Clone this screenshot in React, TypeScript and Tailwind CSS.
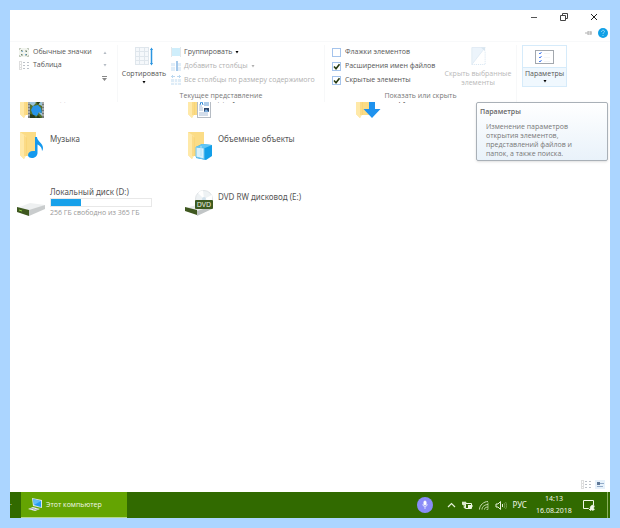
import type { ReactNode } from 'react';

type CheckRow = { id: string; label: string; checked: boolean };
type FolderKind = 'video' | 'documents' | 'downloads' | 'music' | 'objects';

const CHECK_ROWS: CheckRow[] = [
  { id: 'flags', label: 'Флажки элементов', checked: false },
  { id: 'extensions', label: 'Расширения имен файлов', checked: true },
  { id: 'hidden', label: 'Скрытые элементы', checked: true },
];

const FOLDERS: { kind: FolderKind; name: string }[] = [
  { kind: 'video', name: 'Видео' },
  { kind: 'documents', name: 'Документы' },
  { kind: 'downloads', name: 'Загрузки' },
  { kind: 'music', name: 'Музыка' },
  { kind: 'objects', name: 'Объемные объекты' },
];

const DISK = { total: 365, free: 256 };

/* ---------- Icons ---------- */

const TilesIcon = () => (
  <svg width="10" height="9" viewBox="0 0 10 9" shapeRendering="crispEdges">
    <rect x="0" y="0" width="10" height="9" fill="#f1f4ee" />
    <path d="M0 0h2v1H1v1H0zM8 0h2v2H9V1H8zM0 7h1v1h1v1H0zM9 7h1v2H8V8h1z" fill="#c3cabd" />
    <path d="M2 2h2v2h-2zM6 2h2v2h-2zM2 6h2v2h-2zM6 6h2v2h-2z" fill="#b9c3b5" />
    <path d="M2 2h1v1h-1zM7 3h1v1h-1zM2 6h1v1h-1zM7 6h1v1h-1z" fill="#6d8570" />
    <path d="M3 3h1v1h-1zM6 6h1v1h-1z" fill="#7ab2e6" />
  </svg>
);

const TableIcon = () => (
  <svg width="10" height="9" viewBox="0 0 10 9" shapeRendering="crispEdges">
    <path d="M0.5 0.5h2v8h-2zM0 3.5h3M0 6.5h3" fill="none" stroke="#dedede" />
    <path d="M4 1h2v1h-2zM8 1h2v1h-2zM4 4h2v1h-2zM8 4h2v1h-2zM4 7h2v1h-2zM8 7h2v1h-2z" fill="#bcc1c8" />
  </svg>
);

const SortIcon = () => (
  <svg width="18" height="19" viewBox="0 0 18 19">
    <g fill="#f5f8fb" stroke="#dfe6ec" strokeWidth="1" shapeRendering="crispEdges">
      <rect x="0.5" y="0.5" width="13" height="17" />
      <path d="M4.5 0.5v17M9.5 0.5v17M0.5 4.5h13M0.5 9.5h13M0.5 13.5h13" />
    </g>
    <path d="M16.500 2v15" stroke="#2b95e0" strokeWidth="1.500" />
    <path d="M15 3l1.500-2.500L18 3zM15 16l1.500 2.500L18 16z" fill="#2b95e0" />
  </svg>
);

const GroupIcon = () => (
  <svg width="10" height="10" viewBox="0 0 10 10" shapeRendering="crispEdges">
    <rect x="1" y="1" width="8" height="8" fill="#cfeefb" />
    <path d="M0 0h1v10h-1zM9 0h1v10h-1z" fill="#e3e7ea" />
  </svg>
);

const AddColumnIcon = () => (
  <svg width="10" height="10" viewBox="0 0 10 10" shapeRendering="crispEdges">
    <path d="M0 2h4v8h-4zM6 2h4v8h-4z" fill="#e0edf8" />
    <rect x="5" y="0" width="2" height="10" fill="#a4c8ea" />
    <path d="M0 5h4v1h-4zM7 5h3v1h-3z" fill="#f8fbfd" />
  </svg>
);

const FitColumnsIcon = () => (
  <svg width="10" height="10" viewBox="0 0 10 10" shapeRendering="crispEdges">
    <path d="M0 1h4v1h-4zM6 1h4v1h-4zM1 0h1v3h-1zM8 0h1v3h-1z" fill="#bcd8f0" />
    <rect x="0" y="4" width="10" height="6" fill="#deecf7" />
    <path d="M3 4h1v6h-1zM6 4h1v6h-1zM0 7h10v1h-10z" fill="#f8fbfd" />
  </svg>
);

const HideIcon = () => (
  <svg width="15" height="19" viewBox="0 0 15 19">
    <path d="M0.5 0.5h14l-14 18z" fill="#ecf4fb" stroke="#e0ebf4" />
    <path d="M10 0.5h4.5v4z" fill="#d8e5ef" />
    <path d="M14.5 5v13.5h-14" fill="none" stroke="#d4e3f0" strokeDasharray="1 1" />
  </svg>
);

const OptionsIcon = () => (
  <svg width="19" height="14" viewBox="0 0 19 14">
    <rect x="0.5" y="0.5" width="18" height="13" fill="#fff" stroke="#a3a8ae" />
    <path d="M4 3l1 1 1.500-2M4 7l1 1 1.500-2M4 11l1 1 1.500-2" fill="none" stroke="#4a7ff0" />
    <path d="M9 3.500h6M9 7.500h6M9 11.500h6" stroke="#f4f6f7" />
  </svg>
);

const FolderIcon = ({ kind }: { kind: FolderKind }) => (
  <svg width="26" height="29" viewBox="0 0 26 29">
    <path d="M1 1h16v24H6l-1 3-4-4z" fill="#fbdc86" />
    <path d="M1 1l6 4v20l-2 3-4-4z" fill="#ffe9a8" />
    <path d="M5 4l3 3v18H5z" fill="#f9d271" opacity=".6" />
    {kind === 'video' && (
      <g>
        <rect x="9" y="8" width="16" height="20" fill="#53712a" />
        <path d="M9 8h2v20H9zM23 8h2v20h-2z" fill="#777b7a" />
        <path
          d="M9 10h2M9 13h2M9 16h2M9 19h2M9 22h2M9 25h2M23 10h2M23 13h2M23 16h2M23 19h2M23 22h2M23 25h2"
          stroke="#d5d9d8"
        />
        <path d="M11 10h4l2 3-3 3-3-2zM19 14l4-3v5zM19 22l4 1v3z" fill="#9bc4dc" />
        <path d="M12 20l2-4 5-1 3 3 1 5-3-1-2 4-4-1z" fill="#2794e8" />
        <path d="M11 24l4 1 2 3h-6zM17 10l4 2-2 3zM19 25l3 3h-5z" fill="#263a1c" />
      </g>
    )}
    {kind === 'documents' && (
      <g>
        <rect x="10.500" y="8.500" width="13" height="19" fill="#fff" stroke="#b6bcc4" />
        <path d="M12 16h3M12 18h4M12 20h4M12 23h9M12 25h9" stroke="#a8bcd6" />
        <path d="M13 15l1-3h1l1 3" fill="none" stroke="#2b87d8" />
        <path d="M17 13h5M17 15h5" stroke="#5c98d2" />
        <rect x="17" y="18" width="5" height="4" fill="#31486a" />
        <path d="M17 22l2-3 3 3z" fill="#79aee0" />
      </g>
    )}
    {kind === 'downloads' && <path d="M14 6h6v13h5.500L17 28l-8.500-9H14z" fill="#1f92ee" />}
    {kind === 'music' && (
      <path
        d="M16 6h2c0 4 6 6 6 11 0 2-1 3-1 3 0-4-3-6-4.500-6.500V22c0 3-3 5-5.500 5s-4-1-4-3 2-4 5-4h2z"
        fill="#1499ee"
      />
    )}
    {kind === 'objects' && (
      <g>
        <path d="M9 16l6-3 10 1v11l-6 4-10-2z" fill="#129fe8" />
        <path d="M9 16l8 1v11l-8-2z" fill="#d9f1fb" stroke="#6cc4ee" />
        <path d="M9 16l6-3 10 1-7 3z" fill="#62c6f4" />
        <path d="M14 15v10" stroke="#b5e2f7" />
      </g>
    )}
  </svg>
);

const DiskIcon = () => (
  <svg width="28" height="17" viewBox="0 0 28 17">
    <path d="M0 9l13-5 15 2-14 6z" fill="#eef0f1" />
    <path d="M12 11l16-5v4l-16 7z" fill="#c9cccd" />
    <path d="M0 8l12 3v6L0 13z" fill="#3f5820" />
    <path d="M2 11l3 1" stroke="#92cf45" />
  </svg>
);

const DvdIcon = () => (
  <svg width="28" height="26" viewBox="0 0 28 26">
    <circle cx="19" cy="9" r="8.500" fill="#eef2f4" stroke="#e0e4e7" />
    <path d="M19 9L13 3a8.500 8.500 0 0 1 5-2.500zM19 9l8-4v6z" fill="#fff" />
    <circle cx="19" cy="9" r="2" fill="#d2e2ec" />
    <path d="M0 18l12-3 15 1-15 5z" fill="#e9ebec" />
    <path d="M12 21l15-5v3l-15 7z" fill="#c1c5c6" />
    <path d="M0 17l12 3v5L0 21z" fill="#3f5820" />
    <rect x="10" y="10" width="18" height="9" rx="1" fill="#3d5a1f" />
    <text x="19" y="17" textAnchor="middle" fontSize="7" fill="#e8eee0">DVD</text>
  </svg>
);

const ComputerIcon = () => (
  <svg width="15" height="14" viewBox="0 0 15 14">
    <path d="M4 0l10 2v8L5 8z" fill="#d9e5ea" />
    <path d="M5 1l8 2v6L6 7z" fill="#259bf0" />
    <path d="M5 1l8 2-7 4z" fill="#63bdf7" />
    <path d="M0 11l5-2 7 2-5 2z" fill="#eef1f1" />
    <path d="M2 11l5-1M5 12l5-1" stroke="#a7b3b8" />
  </svg>
);

const CaretDown = ({ className = '' }: { className?: string }) => (
  <svg className={className} width="4" height="3" viewBox="0 0 4 3">
    <path d="M0.500 0h3L2 2.500z" fill="currentColor" />
  </svg>
);

/* ---------- Window parts ---------- */

const WindowHeader = () => (
  <header>
    <div className="flex h-3.5 items-center justify-end gap-[22px] pr-3">
      <button aria-label="Свернуть">
        <svg width="8" height="8" viewBox="0 0 8 8"><path d="M1 4.500h6" stroke="#555" /></svg>
      </button>
      <button aria-label="Восстановить">
        <svg width="8" height="8" viewBox="0 0 8 8" fill="none" stroke="#444">
          <path d="M0.500 2.500h5v5h-5zM2.500 2.500v-2h5v5h-2" />
        </svg>
      </button>
      <button aria-label="Закрыть">
        <svg width="8" height="8" viewBox="0 0 8 8"><path d="M1 1l6 6M7 1L1 7" stroke="#222" /></svg>
      </button>
    </div>
    <div className="flex h-[17px] items-center justify-end gap-1.5 pr-0.5">
      <button aria-label="Закрепить ленту">
        <svg width="7" height="6" viewBox="0 0 7 6"><path d="M0 3h3M3 1v4M3 2h3v2H3M6 1v4" stroke="#b2b2b2" fill="none" /></svg>
      </button>
      <button aria-label="Справка">
        <svg width="10" height="10" viewBox="0 0 10 10">
          <circle cx="5" cy="5" r="5" fill="#10a0e6" />
          <path d="M3.500 3.800c0-2 3-2 3-.2 0 1-1.500 1-1.500 2.200M5 7v1" stroke="#9bdcfa" fill="none" />
        </svg>
      </button>
    </div>
  </header>
);

const RibbonGroup = ({ label, className, children }: { label?: string; className: string; children: ReactNode }) => (
  <section className={`flex shrink-0 flex-col border-r border-[#f7f8f9] ${className}`}>
    <div className="flex h-[42px]">{children}</div>
    <div className="h-[15px] text-center leading-[17px] text-[#777]">{label}</div>
  </section>
);

const Ribbon = () => (
  <div className="relative z-10 flex border-t border-[#f8f9fa] pt-[3px] text-[7px] text-[#555]">
    <RibbonGroup className="w-[108px]">
      <div className="flex-1 pt-px pl-[9px]">
        <button className="flex h-[13px] items-center gap-1"><TilesIcon />Обычные значки</button>
        <button className="flex h-[13px] items-center gap-1"><TableIcon />Таблица</button>
      </div>
      <div className="flex w-[18px] flex-col pt-px text-[#b5bcc4]">
        <button aria-label="Вверх" className="flex h-[13px] items-center pl-1"><CaretDown className="rotate-180" /></button>
        <button aria-label="Вниз" className="flex h-[13px] items-center pl-1"><CaretDown /></button>
        <button aria-label="Дополнительно" className="flex h-[13px] items-center pl-[3px]">
          <svg width="5" height="5" viewBox="0 0 5 5" fill="#888"><path d="M0 0h5v1H0zM0 2h5L2.500 5z" /></svg>
        </button>
      </div>
    </RibbonGroup>

    <RibbonGroup className="w-[207px]" label="Текущее представление">
      <button className="flex w-[52px] flex-col items-center pt-0.5">
        <SortIcon />
        <span className="leading-[15px]">Сортировать</span>
        <CaretDown className="text-black" />
      </button>
      <div className="pl-px text-[#b0b0b0]">
        <button className="flex h-3.5 items-center gap-[3px] whitespace-nowrap text-[#555]">
          <GroupIcon />Группировать<CaretDown className="text-black" />
        </button>
        <button disabled className="flex h-3.5 items-center gap-[3px] whitespace-nowrap">
          <AddColumnIcon />Добавить столбцы<CaretDown />
        </button>
        <button disabled className="flex h-3.5 items-center gap-[3px] whitespace-nowrap">
          <FitColumnsIcon />Все столбцы по размеру содержимого
        </button>
      </div>
    </RibbonGroup>

    <RibbonGroup className="w-[192px]" label="Показать или скрыть">
      <div className="w-[115px] pl-[7px]">
        {CHECK_ROWS.map((row) => (
          <div key={row.id} className="flex h-3.5 items-center gap-1">
            <span className="relative flex">
              <input
                id={row.id}
                type="checkbox"
                defaultChecked={row.checked}
                className="peer size-[9px] appearance-none border border-[#a5c4ec] bg-white"
              />
              <svg
                className="pointer-events-none absolute inset-0 hidden peer-checked:block"
                width="9"
                height="9"
                viewBox="0 0 9 9"
              >
                <path d="M2 4.500l2 2.200L7.500 2.200" fill="none" stroke="#263a10" strokeWidth="1.600" />
              </svg>
            </span>
            <label htmlFor={row.id} className="whitespace-nowrap">{row.label}</label>
          </div>
        ))}
      </div>
      <button disabled className="flex flex-1 flex-col items-center pt-0.5 text-[#b8b8b8]">
        <HideIcon />
        <span className="pt-1 leading-[9px]">Скрыть выбранные элементы</span>
      </button>
    </RibbonGroup>

    <div className="pl-[5px]">
      <button className="flex w-[45px] flex-col items-center border border-[#d6ebfa] bg-[#f0f8fe]">
        <span className="flex h-[22px] w-full items-center justify-center border-b border-[#d6ebfa] bg-white"><OptionsIcon /></span>
        <span className="leading-3">Параметры</span>
        <CaretDown className="mb-[3px] text-black" />
      </button>
    </div>

    <div
      role="tooltip"
      className="absolute top-full right-0.5 w-[132px] rounded-xs border border-[#a9b0b7] bg-linear-to-b from-white to-[#e9f2fa] px-[3px] pt-0.5 pb-0.5 shadow-sm"
    >
      <p className="font-semibold leading-[14px] text-[#666]">Параметры</p>
      <p className="px-1.5 pt-[3px] leading-[9px] text-[#777]">
        Изменение параметров<br />открытия элементов,<br />представлений файлов и<br />папок, а также поиска.
      </p>
    </div>
  </div>
);

const FileArea = () => (
  <main className="flex-1 overflow-hidden pl-[7px] font-['Noto_Sans','Open_Sans',sans-serif] text-[8px] text-[#555]">
    {/* the list is scrolled, so the first row is cut by the ribbon */}
    <ul className="-mt-3 grid grid-cols-[repeat(auto-fill,168px)]">
      {FOLDERS.map((folder) => (
        <li key={folder.kind} className="flex h-[41px] gap-[5px] pl-0.5">
          <FolderIcon kind={folder.kind} />
          <span className="pt-0.5 leading-[11px]">{folder.name}</span>
        </li>
      ))}
    </ul>
    <ul className="mt-[13px] grid grid-cols-[repeat(auto-fill,168px)]">
      <li className="flex gap-[5px]">
        <div className="pt-3.5"><DiskIcon /></div>
        <div className="w-[102px]">
          <p className="leading-[13px]">Локальный диск (D:)</p>
          <div className="h-[9px] border border-[#e8e8e8] bg-white">
            <div className="h-full bg-[#18a1ea]" style={{ width: `${((DISK.total - DISK.free) / DISK.total) * 100}%` }} />
          </div>
          <p className="font-['Open_Sans','Noto_Sans',sans-serif] text-[7px] leading-[11px] text-[#999]">
            {DISK.free} ГБ свободно из {DISK.total} ГБ
          </p>
        </div>
      </li>
      <li className="flex gap-[5px] pt-[5px]">
        <DvdIcon />
        <p className="leading-[13px]">DVD RW дисковод (E:)</p>
      </li>
    </ul>
  </main>
);

const StatusBar = () => (
  <div className="flex h-4 items-center justify-end gap-1 pr-[5px]">
    <button aria-label="Таблица"><TableIcon /></button>
    <button aria-label="Крупные значки">
      <svg width="10" height="9" viewBox="0 0 10 9">
        <rect width="10" height="9" fill="#e6f1fb" />
        <rect x="2" y="2" width="3" height="3" fill="#5f7898" />
        <path d="M5 3.500h4M2 6.500h6" stroke="#93abc9" />
      </svg>
    </button>
  </div>
);

const Taskbar = () => (
  <footer className="flex h-[26px] items-stretch bg-[#316a00] text-[7px] text-[#f1f7e8]">
    <span className="w-[11px] pt-1.5">.</span>
    <button className="flex w-[106px] items-center gap-[3px] border-b border-[#b5d78a] bg-[#64a402] pt-px pl-[7px]">
      <ComputerIcon />
      Этот компьютер
    </button>
    <div className="ml-auto flex items-center font-['Noto_Sans','Open_Sans',sans-serif]">
      <button aria-label="Голосовой ввод" className="mr-3.5 flex size-4 items-center justify-center rounded-full bg-[#8a8cf8]">
        <svg width="6" height="10" viewBox="0 0 6 10" fill="none" stroke="#fff">
          <rect x="2" y="1" width="2" height="4" rx="1" fill="#fff" />
          <path d="M1 4v1c0 2 4 2 4 0V4M3 7v2" strokeWidth=".7" />
        </svg>
      </button>
      <div className="flex items-center gap-1.5">
        <svg width="9" height="8" viewBox="0 0 9 8"><path d="M1 6l3.500-3.500L8 6" fill="none" stroke="#e6f0da" strokeWidth="1.200" /></svg>
        <svg width="11" height="9" viewBox="0 0 11 9">
          <path d="M3.500 2.500h6v5h-6zM10 4v2" fill="none" stroke="#f1f7e8" />
          <rect x="6" y="4" width="3" height="3" fill="#f1f7e8" />
          <path d="M0 1h4v2l-1 1H1L0 3zM2 4v3h2" fill="#dbe8cc" stroke="#dbe8cc" strokeWidth=".6" />
        </svg>
        <svg width="10" height="9" viewBox="0 0 10 9" fill="none" stroke="#c8dbb0">
          <path d="M.500 8.500C.500 4 5 .500 9 .500M3 8.500c0-3 3-5 6-5M5.500 8.500c0-2 2-2.500 3.500-2.500" />
          <path d="M7.500 8.500h1.500v-7" strokeWidth=".7" />
        </svg>
        <svg width="12" height="9" viewBox="0 0 12 9" fill="none" stroke="#e6f0da">
          <path d="M1 3h2l2.500-2.500v8L3 6H1z" />
          <path d="M7.500 3v3" />
          <path d="M9 2c1 1 1 4 0 5M10.500 1c1.500 2 1.500 5 0 7" stroke="#84a761" strokeWidth=".8" />
        </svg>
        <span className="text-[8px]">РУС</span>
      </div>
      <time className="ml-[9px] w-9 text-center leading-3 whitespace-nowrap" dateTime="2018-08-16T14:13">14:13<br />16.08.2018</time>
      <button aria-label="Центр уведомлений" className="ml-[11px]">
        <svg width="12" height="12" viewBox="0 0 12 12" fill="none" stroke="#f1f7e8">
          <path d="M10.500 6V1.500h-10v8h5l2 2v-2h1" />
          <path d="M11.500 7a2.500 2.500 0 1 0 0 3.500C10.500 10 10.500 8 11.500 7z" fill="#f1f7e8" strokeWidth=".5" />
        </svg>
      </button>
      <span className="ml-3 h-full w-[3px] border-l border-[#8bb15e]" />
    </div>
  </footer>
);

const App = () => (
  <div className="flex min-h-screen bg-[#abd5ff] p-2.5 font-['Open_Sans','Noto_Sans',sans-serif]">
    <div className="flex min-w-0 flex-1 flex-col bg-white">
      <WindowHeader />
      <Ribbon />
      <FileArea />
      <StatusBar />
      <Taskbar />
    </div>
  </div>
);

export default App;
